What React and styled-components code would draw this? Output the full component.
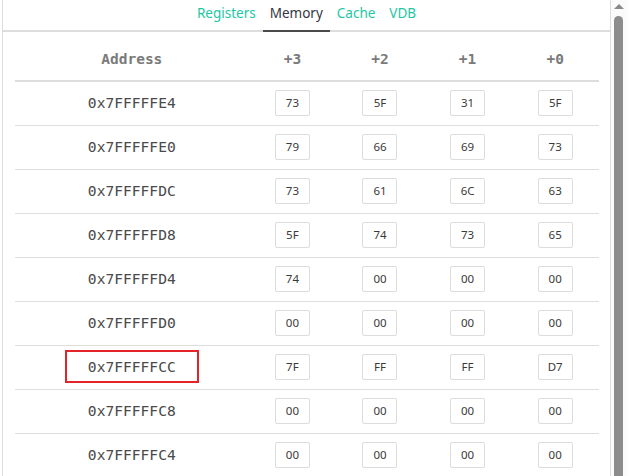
import React from 'react';
import styled, { createGlobalStyle } from 'styled-components';

const GlobalStyle = createGlobalStyle`
  html, body {
    margin: 0;
    padding: 0;
    background: #fff;
    overflow: hidden;
  }
  * { box-sizing: border-box; }
`;

const Page = styled.div`
  display: flex;
  height: 476px;
  padding-left: 2px;
  overflow: hidden;
`;

const Panel = styled.div`
  width: 609px;
  flex: 0 0 609px;
  border-left: 1px solid #dcdcdc;
  border-right: 1px solid #dcdcdc;
  display: flex;
  flex-direction: column;
`;

const TabBar = styled.div`
  display: flex;
  justify-content: center;
  border-bottom: 2px solid #dddddd;
  height: 32px;
`;

const Tab = styled.div`
  padding: 3px 7px 0;
  font-family: "Noto Sans", "Open Sans", sans-serif;
  font-size: 13.5px;
  line-height: 20px;
  color: ${(p) => (p.active ? '#333642' : '#1cc7a3')};
  border-bottom: ${(p) => (p.active ? '2px solid #4a4a4a' : '2px solid transparent')};
  margin-bottom: -2px;
  height: 32px;
`;

const TableWrap = styled.div`
  padding: 0 11px 0 12px;
`;

const Table = styled.table`
  width: 100%;
  border-collapse: collapse;
  table-layout: fixed;
`;

const HeadCell = styled.th`
  width: ${(p) => p.w};
  height: 49px;
  padding: 5px 0 0;
  border-bottom: 2px solid #dddddd;
  font-family: "DejaVu Sans Mono", "Liberation Mono", monospace;
  font-size: 14.5px;
  font-weight: bold;
  color: #7a7a7a;
  text-align: center;
  vertical-align: middle;
`;

const Cell = styled.td`
  height: 44px;
  padding: 0;
  border-bottom: 1px solid #dddddd;
  text-align: center;
  vertical-align: middle;
`;

const Address = styled.span`
  display: inline-block;
  font-family: "DejaVu Sans Mono", "Liberation Mono", monospace;
  font-size: 14.6px;
  line-height: 17px;
  color: #4a4a4a;
  padding: 6px 21px 6px 21px;
  margin-top: -2px;
  border: 2px solid ${(p) => (p.marked ? '#e3242b' : 'transparent')};
`;

const ByteBox = styled.span`
  display: inline-block;
  width: 35px;
  height: 26px;
  border: 1px solid #dcdcdc;
  border-radius: 2px;
  font-family: "Noto Sans", "Open Sans", sans-serif;
  font-size: 11.5px;
  line-height: 24px;
  color: #3a3a3a;
  text-align: center;
`;

const ScrollTrack = styled.div`
  flex: 0 0 16px;
  display: flex;
  flex-direction: column;
  align-items: center;
  padding: 4px 1px 0 0;
  background: #fbfbfb;
`;

const ArrowUp = styled.div`
  width: 0;
  height: 0;
  border-left: 5px solid transparent;
  border-right: 5px solid transparent;
  border-bottom: 5px solid #8a8a8a;
  margin-bottom: 7px;
`;

const Thumb = styled.div`
  width: 9px;
  flex: 1;
  background: #8c8c8c;
  border-radius: 5px 5px 0 0;
`;

const rows = [
  ['0x7FFFFFE4', ['73', '5F', '31', '5F']],
  ['0x7FFFFFE0', ['79', '66', '69', '73']],
  ['0x7FFFFFDC', ['73', '61', '6C', '63']],
  ['0x7FFFFFD8', ['5F', '74', '73', '65']],
  ['0x7FFFFFD4', ['74', '00', '00', '00']],
  ['0x7FFFFFD0', ['00', '00', '00', '00']],
  ['0x7FFFFFCC', ['7F', 'FF', 'FF', 'D7']],
  ['0x7FFFFFC8', ['00', '00', '00', '00']],
  ['0x7FFFFFC4', ['00', '00', '00', '00']],
];

export default function App() {
  const tabs = ['Registers', 'Memory', 'Cache', 'VDB'];
  return (
    <>
      <GlobalStyle />
      <Page>
        <Panel>
          <TabBar>
            {tabs.map((t) => (
              <Tab key={t} active={t === 'Memory'}>{t}</Tab>
            ))}
          </TabBar>
          <TableWrap>
            <Table>
              <thead>
                <tr>
                  <HeadCell w="40%">Address</HeadCell>
                  <HeadCell w="15%">+3</HeadCell>
                  <HeadCell w="15%">+2</HeadCell>
                  <HeadCell w="15%">+1</HeadCell>
                  <HeadCell w="15%">+0</HeadCell>
                </tr>
              </thead>
              <tbody>
                {rows.map(([addr, bytes]) => (
                  <tr key={addr}>
                    <Cell>
                      <Address marked={addr === '0x7FFFFFCC'}>{addr}</Address>
                    </Cell>
                    {bytes.map((b, i) => (
                      <Cell key={i}>
                        <ByteBox>{b}</ByteBox>
                      </Cell>
                    ))}
                  </tr>
                ))}
              </tbody>
            </Table>
          </TableWrap>
        </Panel>
        <ScrollTrack>
          <ArrowUp />
          <Thumb />
        </ScrollTrack>
      </Page>
    </>
  );
}
